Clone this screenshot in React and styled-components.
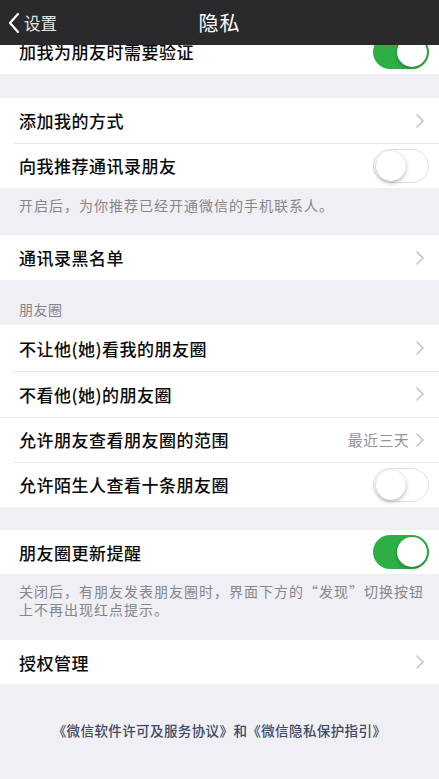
import React from "react";
import styled, { createGlobalStyle } from "styled-components";

const GlobalStyle = createGlobalStyle`
  html, body {
    margin: 0;
    padding: 0;
    background: #efeff4;
  }
  body {
    font-family: "Noto Sans CJK SC", "Noto Sans", sans-serif;
  }
`;

const Screen = styled.div`
  width: 439px;
  height: 779px;
  display: flex;
  flex-direction: column;
  background: #efeff4;
  overflow: hidden;
`;

const NavBar = styled.div`
  height: 45px;
  flex-shrink: 0;
  background: #2a2a2c;
  display: grid;
  grid-template-columns: 1fr auto 1fr;
  align-items: center;
  position: relative;
  z-index: 2;
`;

const Back = styled.div`
  display: flex;
  align-items: center;
  gap: 3px;
  padding-left: 7px;
  color: #e6e6e6;
  font-size: 16.5px;
`;

const Title = styled.div`
  color: #ffffff;
  font-size: 20px;
  letter-spacing: 1px;
`;

const Content = styled.div`
  flex: 1;
  overflow: hidden;
`;

const Scroll = styled.div`
  margin-top: -16px;
`;

const Group = styled.div`
  background: #ffffff;
`;

const Row = styled.div`
  height: ${(p) => p.h || 45}px;
  display: flex;
  align-items: center;
  padding: 0 10px 0 19px;
  position: relative;
  font-size: 17px;
  font-weight: 500;
  letter-spacing: 0.5px;
  color: #0a0a0a;

  & + & {
    box-shadow: inset 0 1px 0 #e6e6ea;
  }
  & + &::before {
    content: "";
    position: absolute;
    left: 0;
    top: 0;
    width: 14px;
    height: 1px;
    background: #ffffff;
  }
`;

const Label = styled.span`
  flex: 1;
`;

const Value = styled.span`
  color: #949499;
  font-size: 15px;
  font-weight: 400;
  letter-spacing: 0.3px;
  margin-right: 6px;
`;

const Gap = styled.div`
  height: ${(p) => p.h}px;
`;

const Note = styled.div`
  padding: ${(p) => p.pad || "8px 6px 20px 19px"};
  color: #86868b;
  font-size: 14px;
  letter-spacing: 1px;
  line-height: ${(p) => p.lh || 19}px;
`;

const SectionHead = styled.div`
  height: 45px;
  display: flex;
  align-items: flex-end;
  padding: 0 19px 6px;
  box-sizing: border-box;
  color: #86868b;
  font-size: 14px;
  letter-spacing: 0.5px;
`;

const Track = styled.div`
  width: 56px;
  height: 34px;
  border-radius: 17px;
  box-sizing: border-box;
  background: ${(p) => (p.on ? "#2eaf45" : "#ffffff")};
  border: ${(p) => (p.on ? "none" : "1.5px solid #e0e0e3")};
  display: flex;
  align-items: center;
  justify-content: ${(p) => (p.on ? "flex-end" : "flex-start")};
  padding: 2px;
`;

const Knob = styled.div`
  width: 30px;
  height: 30px;
  border-radius: 50%;
  background: #ffffff;
  box-shadow: 0 2px 4px rgba(0, 0, 0, 0.25), 0 0 0 0.5px rgba(0, 0, 0, 0.08);
`;

const Footer = styled.div`
  padding-top: 36px;
  text-align: center;
  color: #3e4a68;
  font-size: 13.5px;
  font-weight: 500;
  letter-spacing: 0.4px;
`;

function Chevron() {
  return (
    <svg width="10" height="16" viewBox="0 0 10 16" style={{ marginRight: 4 }}>
      <path d="M2 2 L8 8 L2 14" fill="none" stroke="#c4c4c8" strokeWidth="1.6" strokeLinecap="round" strokeLinejoin="round" />
    </svg>
  );
}

function Switch({ on }) {
  return (
    <Track on={on ? 1 : 0}>
      <Knob />
    </Track>
  );
}

function Item({ label, value, toggle, h }) {
  return (
    <Row h={h}>
      <Label>{label}</Label>
      {value && <Value>{value}</Value>}
      {toggle === undefined ? <Chevron /> : <Switch on={toggle} />}
    </Row>
  );
}

export default function App() {
  return (
    <Screen>
      <GlobalStyle />
      <NavBar>
        <Back>
          <svg width="14" height="22" viewBox="0 0 14 22">
            <path d="M11 2 L3 11 L11 20" fill="none" stroke="#ffffff" strokeWidth="2.2" strokeLinecap="round" strokeLinejoin="round" />
          </svg>
          <span>设置</span>
        </Back>
        <Title>隐私</Title>
        <div />
      </NavBar>
      <Content>
        <Scroll>
          <Group>
            <Item label="加我为朋友时需要验证" toggle={true} />
          </Group>
          <Gap h={24} />
          <Group>
            <Item label="添加我的方式" />
            <Item label="向我推荐通讯录朋友" toggle={false} />
          </Group>
          <Note>开启后，为你推荐已经开通微信的手机联系人。</Note>
          <Group>
            <Item label="通讯录黑名单" />
          </Group>
          <SectionHead>朋友圈</SectionHead>
          <Group>
            <Item label="不让他(她)看我的朋友圈" h={46} />
            <Item label="不看他(她)的朋友圈" h={46} />
            <Item label="允许朋友查看朋友圈的范围" value="最近三天" />
            <Item label="允许陌生人查看十条朋友圈" toggle={false} />
          </Group>
          <Gap h={23} />
          <Group>
            <Item label="朋友圈更新提醒" toggle={true} h={44} />
          </Group>
          <Note pad="8px 6px 22px 19px" lh={18}>
            关闭后，有朋友发表朋友圈时，界面下方的“发现”切换按钮上不再出现红点提示。
          </Note>
          <Group>
            <Item label="授权管理" h={44} />
          </Group>
          <Footer>《微信软件许可及服务协议》和《微信隐私保护指引》</Footer>
        </Scroll>
      </Content>
    </Screen>
  );
}
